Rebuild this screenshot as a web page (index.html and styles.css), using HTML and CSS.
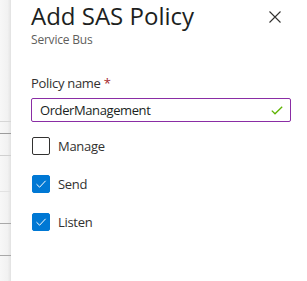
FILE: index.html
```html
<!DOCTYPE html>
<html>
<head>
<meta charset="utf-8">
<link rel="stylesheet" href="styles.css">
</head>
<body>
<div class="backdrop">
  <div class="bg-row r1"></div>
  <div class="bg-row r2"></div>
  <div class="bg-row r3"></div>
  <div class="bg-row r4"></div>
  <div class="bg-row r5"></div>
  <div class="bg-row r6"></div>
</div>
<div class="panel">
  <div class="header">
    <div class="titles">
      <h1 class="title">Add SAS Policy</h1>
      <div class="subtitle">Service Bus</div>
    </div>
    <button class="close" aria-label="Close">
      <svg width="12" height="12" viewBox="0 0 12 12"><path d="M0.5 0.5 L11.5 11.5 M11.5 0.5 L0.5 11.5" stroke="#323130" stroke-width="1.1" fill="none"/></svg>
    </button>
  </div>
  <div class="field">
    <label class="label">Policy name <span class="req">*</span></label>
    <div class="input">
      <span class="value">OrderManagement</span>
      <svg class="valid" width="12" height="9" viewBox="0 0 12 9"><path d="M0.8 4.6 L4 7.8 L11.2 0.7" stroke="#5db300" stroke-width="1.3" fill="none"/></svg>
    </div>
  </div>
  <div class="checks">
    <label class="check"><span class="box"></span><span class="ctext">Manage</span></label>
    <label class="check"><span class="box on"><svg width="12" height="10" viewBox="0 0 12 10"><path d="M1.5 5.2 L4.6 8.2 L10.6 1.8" stroke="#fff" stroke-width="1" fill="none"/></svg></span><span class="ctext">Send</span></label>
    <label class="check"><span class="box on"><svg width="12" height="10" viewBox="0 0 12 10"><path d="M1.5 5.2 L4.6 8.2 L10.6 1.8" stroke="#fff" stroke-width="1" fill="none"/></svg></span><span class="ctext">Listen</span></label>
  </div>
</div>
</body>
</html>
```
FILE: styles.css
```css
html, body {
  margin: 0;
  padding: 0;
  background: #fff;
  height: 100%;
}
body {
  display: flex;
  font-family: "Open Sans", "Noto Sans", sans-serif;
  color: #323130;
  overflow: hidden;
}
.backdrop {
  width: 11px;
  flex: none;
  background: linear-gradient(to right, #f7f7f7 0%, #f1f1f1 70%, #e2e2e2 100%);
  display: flex;
  flex-direction: column;
}
.bg-row { flex: none; }
.r1 { height: 121px; border-bottom: 1px solid #d6d6d6; }
.r2 { height: 11px; border-bottom: 1px solid #9c9c9c; }
.r3 { height: 21px; border-bottom: 1px solid #d0d0d0; }
.r4 { height: 35px; border-bottom: 1px solid #e2e2e2; }
.r5 { height: 31px; border-bottom: 1px solid #a8a8a8; }
.r6 { height: 31px; border-bottom: 1px solid #a8a8a8; }
.panel {
  flex: 1;
  padding: 0 16px 0 20px;
  background: #fff;
}
.header {
  display: flex;
  justify-content: space-between;
  align-items: flex-start;
}
.title {
  margin: 0;
  font-size: 24px;
  font-weight: 400;
  line-height: 32px;
  color: #201f1e;
  letter-spacing: 0;
}
.subtitle {
  font-size: 12px;
  line-height: 16px;
  color: #605e5c;
  letter-spacing: -0.2px;
}
.close {
  border: 0;
  background: transparent;
  padding: 0;
  margin: 11px 10px 0 0;
  width: 12px;
  height: 12px;
  display: flex;
}
.field {
  margin-top: 26px;
}
.label {
  display: block;
  font-size: 13px;
  line-height: 18px;
  color: #323130;
  letter-spacing: -0.3px;
}
.req { color: #a4262c; }
.input {
  margin-top: 6px;
  width: 260px;
  height: 24px;
  box-sizing: border-box;
  border: 1px solid #8a2da5;
  border-radius: 2px;
  display: flex;
  align-items: center;
  justify-content: space-between;
  padding: 0 7px 0 8px;
}
.value {
  font-size: 13px;
  color: #201f1e;
  letter-spacing: -0.4px;
}
.checks {
  display: flex;
  flex-direction: column;
  gap: 20px;
  margin-top: 15px;
}
.check {
  display: flex;
  align-items: center;
  height: 18px;
  font-size: 13px;
  letter-spacing: -0.3px;
}
.box {
  width: 18px;
  height: 18px;
  box-sizing: border-box;
  border: 1px solid #323130;
  border-radius: 2px;
  display: flex;
  align-items: center;
  justify-content: center;
  margin-right: 8px;
  margin-left: 1px;
}
.box.on {
  background: #0078d4;
  border-color: #0078d4;
}
.ctext { color: #323130; }
```
